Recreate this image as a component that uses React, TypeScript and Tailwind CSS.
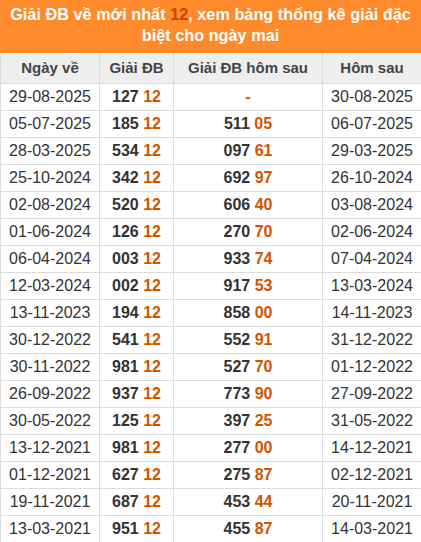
import React from "react";

const rows: [string, string, string, string][] = [
  ["29-08-2025", "127", "", "30-08-2025"],
  ["05-07-2025", "185", "511 05", "06-07-2025"],
  ["28-03-2025", "534", "097 61", "29-03-2025"],
  ["25-10-2024", "342", "692 97", "26-10-2024"],
  ["02-08-2024", "520", "606 40", "03-08-2024"],
  ["01-06-2024", "126", "270 70", "02-06-2024"],
  ["06-04-2024", "003", "933 74", "07-04-2024"],
  ["12-03-2024", "002", "917 53", "13-03-2024"],
  ["13-11-2023", "194", "858 00", "14-11-2023"],
  ["30-12-2022", "541", "552 91", "31-12-2022"],
  ["30-11-2022", "981", "527 70", "01-12-2022"],
  ["26-09-2022", "937", "773 90", "27-09-2022"],
  ["30-05-2022", "125", "397 25", "31-05-2022"],
  ["13-12-2021", "981", "277 00", "14-12-2021"],
  ["01-12-2021", "627", "275 87", "02-12-2021"],
  ["19-11-2021", "687", "453 44", "20-11-2021"],
  ["13-03-2021", "951", "455 87", "14-03-2021"],
];

function Num({ head, tail }: { head: string; tail: string }) {
  return (
    <span className="font-bold">
      <span className="text-[#333]">{head}</span>{" "}
      <span className="text-[#d35400]">{tail}</span>
    </span>
  );
}

export default function App() {
  return (
    <div className="w-[421px] bg-white font-['Liberation_Sans',Arial,sans-serif]">
      <div className="bg-[#ff8a2b] h-[53px] pt-[4px] px-1 text-center text-white font-bold text-[16.3px] leading-[21px]">
        Giải ĐB về mới nhất <span className="text-[#bd4b00]">12</span>, xem bảng thống kê giải đặc biệt cho ngày mai
      </div>
      <table className="w-[421px] border-collapse table-fixed">
        <colgroup>
          <col className="w-[99px]" />
          <col className="w-[74px]" />
          <col className="w-[149px]" />
          <col className="w-[99px]" />
        </colgroup>
        <thead>
          <tr className="bg-[#eeeeee] h-[30px] text-[15px] font-bold text-[#444]">
            <th className="border border-[#dcdcdc] border-t-white font-bold">Ngày về</th>
            <th className="border border-[#dcdcdc] border-t-white font-bold">Giải ĐB</th>
            <th className="border border-[#dcdcdc] border-t-white font-bold">Giải ĐB hôm sau</th>
            <th className="border border-[#dcdcdc] border-t-white font-bold">Hôm sau</th>
          </tr>
        </thead>
        <tbody>
          {rows.map(([d, g, n, h]) => {
            const [a, b] = n.split(" ");
            return (
              <tr key={d} className="h-[27px] text-[16px] text-[#333]">
                <td className="border border-[#dcdcdc] text-center p-0">{d}</td>
                <td className="border border-[#dcdcdc] text-center p-0">
                  <Num head={g} tail="12" />
                </td>
                <td className="border border-[#dcdcdc] text-center p-0">
                  {n ? <Num head={a} tail={b} /> : <span className="font-bold text-[#d35400]">-</span>}
                </td>
                <td className="border border-[#dcdcdc] text-center p-0">{h}</td>
              </tr>
            );
          })}
        </tbody>
      </table>
    </div>
  );
}
